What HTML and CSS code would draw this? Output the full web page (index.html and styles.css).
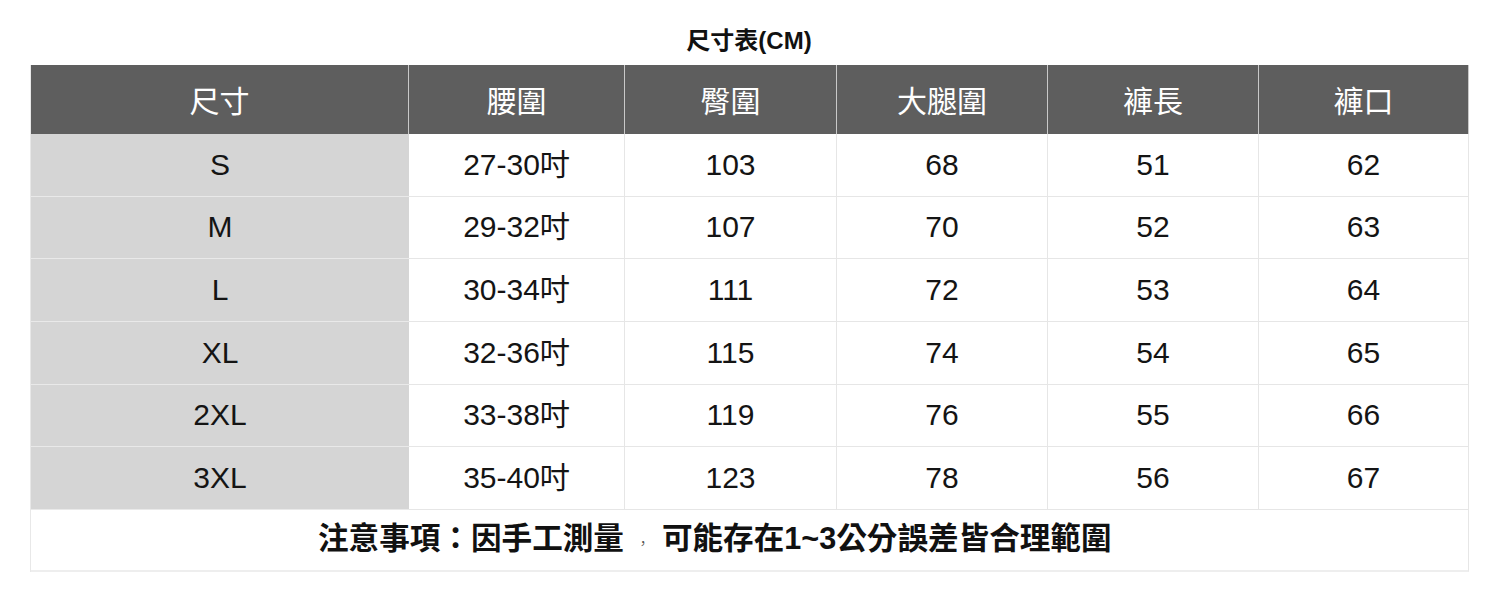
FILE: index.html
```html
<!DOCTYPE html>
<html lang="zh-Hant">
<head>
<meta charset="utf-8">
<title>尺寸表(CM)</title>
<link rel="stylesheet" href="styles.css">
</head>
<body>
<div class="page">
  <h1 class="title">尺寸表(CM)</h1>
  <div class="table">
    <div class="cell head">尺寸</div>
    <div class="cell head">腰圍</div>
    <div class="cell head">臀圍</div>
    <div class="cell head">大腿圍</div>
    <div class="cell head">褲長</div>
    <div class="cell head">褲口</div>

    <div class="cell size">S</div>
    <div class="cell">27-30吋</div>
    <div class="cell">103</div>
    <div class="cell">68</div>
    <div class="cell">51</div>
    <div class="cell">62</div>

    <div class="cell size">M</div>
    <div class="cell">29-32吋</div>
    <div class="cell">107</div>
    <div class="cell">70</div>
    <div class="cell">52</div>
    <div class="cell">63</div>

    <div class="cell size">L</div>
    <div class="cell">30-34吋</div>
    <div class="cell">111</div>
    <div class="cell">72</div>
    <div class="cell">53</div>
    <div class="cell">64</div>

    <div class="cell size">XL</div>
    <div class="cell">32-36吋</div>
    <div class="cell">115</div>
    <div class="cell">74</div>
    <div class="cell">54</div>
    <div class="cell">65</div>

    <div class="cell size">2XL</div>
    <div class="cell">33-38吋</div>
    <div class="cell">119</div>
    <div class="cell">76</div>
    <div class="cell">55</div>
    <div class="cell">66</div>

    <div class="cell size">3XL</div>
    <div class="cell">35-40吋</div>
    <div class="cell">123</div>
    <div class="cell">78</div>
    <div class="cell">56</div>
    <div class="cell">67</div>

    <div class="cell note">注意事項：因手工測量<span class="comma">，</span>可能存在1~3公分誤差皆合理範圍</div>
  </div>
</div>
</body>
</html>
```

FILE: styles.css
```css
html, body {
  margin: 0;
  padding: 0;
  background: #ffffff;
}

body {
  font-family: "Liberation Sans", "Noto Sans CJK TC", Arial, sans-serif;
  color: #141414;
}

.page {
  padding: 26px 0 0 30px;
}

.title {
  margin: 0 0 9px 0;
  width: 1438px;
  text-align: center;
  font-size: 24px;
  line-height: 30px;
  font-weight: bold;
  color: #111;
}

.table {
  display: grid;
  width: 1438px;
  grid-template-columns: 378px 216px 212px 211px 211px 210px;
  grid-template-rows: 69px repeat(6, 62.67px) 62px;
  border-left: 1px solid #e8e8e8;
  box-sizing: border-box;
}

.cell {
  display: flex;
  align-items: center;
  justify-content: center;
  font-size: 30px;
  line-height: 1;
  border-right: 1px solid #e6e6e6;
  border-bottom: 1px solid #e6e6e6;
  box-sizing: border-box;
  background: #ffffff;
}

.head {
  background: #5e5e5e;
  color: #ffffff;
  border-right: 1px solid #c9c9c9;
  border-bottom: none;
  padding-top: 4px;
}

.head:last-of-type {
  border-right: none;
}

.size {
  background: #d5d5d5;
  border-bottom: 1px solid #e9e9e9;
  border-right: none;
}

.note {
  grid-column: 1 / -1;
  justify-content: flex-start;
  padding-left: 287px;
  padding-bottom: 4px;
  font-weight: bold;
  font-size: 30.6px;
  color: #111;
  border-bottom: 2px solid #eeeeee;
}

.comma {
  display: inline-block;
  width: 38px;
  text-align: center;
  font-family: "Noto Sans CJK TC", sans-serif;
  font-weight: 300;
  font-size: 16px;
  color: #555;
  transform: translateY(4px);
}
```
